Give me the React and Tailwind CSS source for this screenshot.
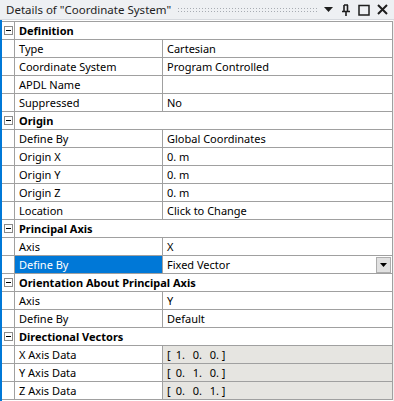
import React from 'react';

const sections = [
    {
        title: 'Definition',
        rows: [
            ['Type', 'Cartesian'],
            ['Coordinate System', 'Program Controlled'],
            ['APDL Name', ''],
            ['Suppressed', 'No'],
        ],
    },
    {
        title: 'Origin',
        rows: [
            ['Define By', 'Global Coordinates'],
            ['Origin X', '0. m'],
            ['Origin Y', '0. m'],
            ['Origin Z', '0. m'],
            ['Location', 'Click to Change'],
        ],
    },
    {
        title: 'Principal Axis',
        rows: [
            ['Axis', 'X'],
            ['Define By', 'Fixed Vector', 'select'],
        ],
    },
    {
        title: 'Orientation About Principal Axis',
        rows: [
            ['Axis', 'Y'],
            ['Define By', 'Default'],
        ],
    },
    {
        title: 'Directional Vectors',
        rows: [
            ['X Axis Data', ['1.', '0.', '0.'], 'ro'],
            ['Y Axis Data', ['0.', '1.', '0.'], 'ro'],
            ['Z Axis Data', ['0.', '0.', '1.'], 'ro'],
        ],
    },
];

function Minus() {
    return (
        <div className="w-[9px] h-[9px] border border-[#8a8a8a] bg-white flex items-center justify-center">
            <div className="w-[5px] h-px bg-black" />
        </div>
    );
}

function TitleBar() {
    return (
        <div className="h-[20px] flex items-center bg-[#eef0f3] border-b border-[#d6d9de] pl-[6px] pr-[6px]">
            <span className="text-[11.5px] text-[#1e1e1e] whitespace-nowrap">Details of "Coordinate System"</span>
            <div
                className="flex-1 h-[5px] mx-[6px]"
                style={{ backgroundImage: 'radial-gradient(#a8acb3 0.6px, transparent 0.8px)', backgroundSize: '3px 3px' }}
            />
            <div className="flex items-center gap-[5px] text-[#1e1e1e]">
                <svg width="9" height="6" viewBox="0 0 9 6"><path d="M0 0 H9 L4.5 5 Z" fill="#1e1e1e" /></svg>
                <svg width="10" height="12" viewBox="0 0 10 12" className="ml-[3px]">
                    <path d="M1 7.5 H9 M3 1 H7 M3 1 V7.5 M6.5 1 V7.5 M5 7.5 V12" stroke="#1e1e1e" strokeWidth="1.6" fill="none" />
                </svg>
                <svg width="12" height="12" viewBox="0 0 12 12" className="ml-[2px]">
                    <rect x="1" y="1.5" width="10" height="9.5" stroke="#1e1e1e" strokeWidth="1.5" fill="none" />
                </svg>
                <svg width="11" height="11" viewBox="0 0 11 11" className="ml-[2px]">
                    <path d="M1 1 L10 10 M10 1 L1 10" stroke="#1e1e1e" strokeWidth="2" />
                </svg>
            </div>
        </div>
    );
}

function Vector({ items }) {
    return (
        <span className="flex items-center">
            <span>[</span>
            {items.map((v, i) => (
                <span key={i} className={`${i === 0 ? 'ml-[5px]' : 'ml-[7px]'} w-[10px]`}>{v}</span>
            ))}
            <span className="ml-[2px]">]</span>
        </span>
    );
}

function Row({ label, value, kind }) {
    const selected = kind === 'select';
    return (
        <div className="flex h-[18px] border-b border-[#a0a0a0]">
            <div className="w-[12px]" />
            <div
                className={`w-[149px] border-l border-r border-[#a0a0a0] pl-[4px] flex items-center ${selected ? 'bg-[#0078d7] text-white' : 'text-black'}`}
            >
                {label}
            </div>
            <div
                className={`flex-1 border-r border-[#a0a0a0] pl-[4px] flex items-center ${kind === 'ro' ? 'bg-[#e6e5e1]' : 'bg-white'}`}
            >
                <span className="flex-1 whitespace-pre">
                    {Array.isArray(value) ? <Vector items={value} /> : value}
                </span>
                {selected && (
                    <div className="w-[15px] h-[16px] mr-px bg-[#e1e1e1] border border-[#adadad] flex items-center justify-center">
                        <svg width="7" height="4" viewBox="0 0 7 4"><path d="M0 0 H7 L3.5 4 Z" fill="#000" /></svg>
                    </div>
                )}
            </div>
        </div>
    );
}

function Header({ title }) {
    return (
        <div className="flex h-[18px] border-b border-[#a0a0a0]">
            <div className="w-[12px] flex items-center justify-start pl-[2px]">
                <Minus />
            </div>
            <div className="flex-1 border-l border-r border-[#a0a0a0] pl-[4px] flex items-center font-bold text-black">
                {title}
            </div>
        </div>
    );
}

export default function App() {
    return (
        <div
            className="w-[394px] h-[401px] overflow-hidden bg-[#f0f0f0] text-[11px] leading-none"
            style={{ fontFamily: '"Noto Sans", sans-serif' }}
        >
            <TitleBar />
            <div className="flex h-[381px]">
                <div className="w-[2px] bg-[#0078d7]" />
                <div className="flex-1 bg-white">
                    <div className="h-px" />
                    <div className="border-t border-[#a0a0a0]" />
                    {sections.map((s) => (
                        <div key={s.title}>
                            <Header title={s.title} />
                            {s.rows.map((r, i) => (
                                <Row key={i} label={r[0]} value={r[1]} kind={r[2]} />
                            ))}
                        </div>
                    ))}
                </div>
                <div className="w-[1px] bg-[#f0f0f0]" />
            </div>
        </div>
    );
}
